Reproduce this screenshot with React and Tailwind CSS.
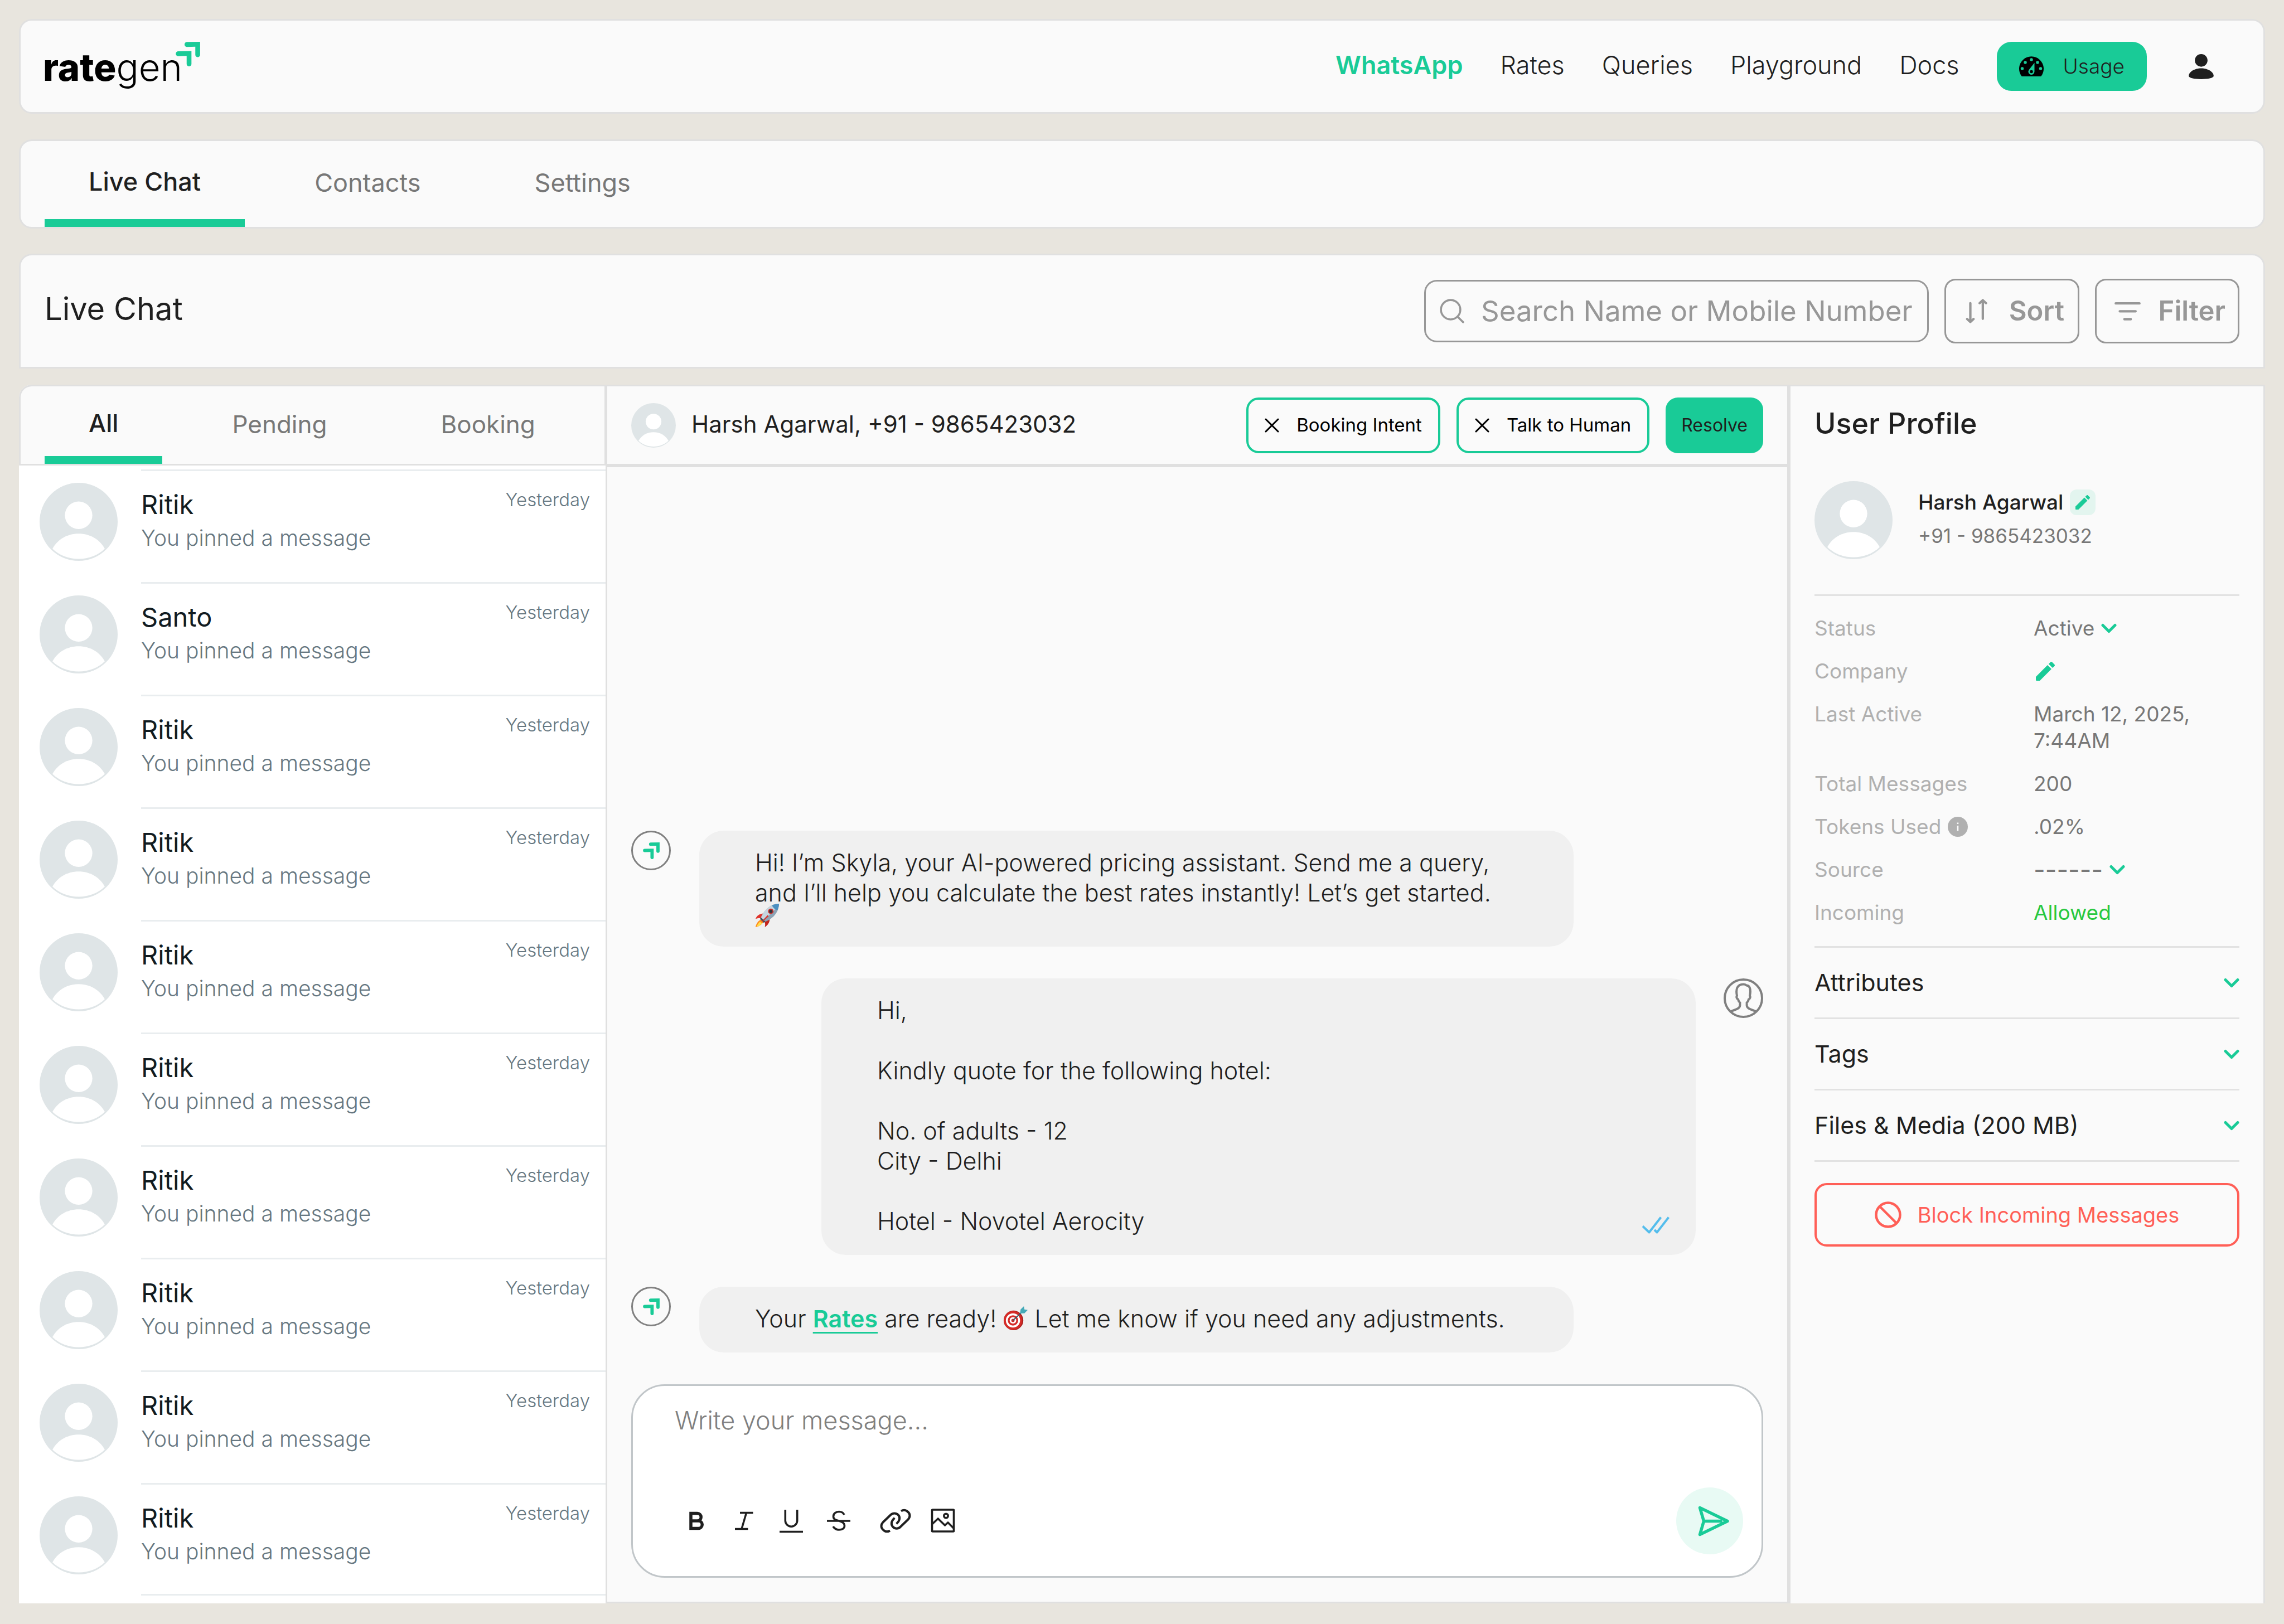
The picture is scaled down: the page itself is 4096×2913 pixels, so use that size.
import React from "react";

const NAV = ["Rates", "Queries", "Playground", "Docs"];
const CONTACTS = ["Ritik", "Santo", "Ritik", "Ritik", "Ritik", "Ritik", "Ritik", "Ritik", "Ritik", "Ritik"];
const SECTIONS = ["Attributes", "Tags", "Files & Media (200 MB)"];

function Arrows({ className }) {
  return (
    <svg viewBox="0 0 183 184" className={className} fill="#19cb97" aria-hidden="true">
      <path d="M85 1 183 0V97a18 18 0 0 1-36 0V37L85 39a19 19 0 0 1 0-38Z" />
      <path d="M19 71 118 69V166a18 18 0 0 1-36 0V106L19 108a18.500 18.500 0 0 1 0-37Z" />
    </svg>
  );
}

function Avatar({ className }) {
  return (
    <svg viewBox="0 0 100 100" className={className} aria-hidden="true">
      <circle cx="50" cy="50" r="50" fill="#dfe5e7" />
      <circle cx="50" cy="41.600" r="17.600" fill="#fff" />
      <path d="M16.500 84.500C23 72.500 35.500 65.200 50 65.200S77 72.500 83.500 84.500C75 93 63 97.500 50 97.500S25 93 16.500 84.500Z" fill="#fff" />
    </svg>
  );
}

function Chevron() {
  return (
    <svg viewBox="0 0 28 18" className="h-[18px] w-7 shrink-0" fill="none" stroke="#19cb97" strokeWidth="5" strokeLinecap="round" strokeLinejoin="round" aria-hidden="true">
      <path d="M3 3.500 14 14.500 25 3.500" />
    </svg>
  );
}

function Pencil({ className }) {
  return (
    <svg viewBox="3 3 18 18" className={className} fill="#19cb97" aria-hidden="true">
      <path d="M3 17.250V20.400c0 .35.25.6.6.6h3.150L17.810 9.940l-3.750-3.750L3 17.250ZM20.710 7.040c.39-.39.39-1.020 0-1.410l-2.340-2.340c-.39-.39-1.020-.39-1.410 0l-1.830 1.830 3.750 3.750 1.830-1.830Z" />
    </svg>
  );
}

function Gauge() {
  return (
    <svg viewBox="0 0 120 98" className="h-9 w-11" aria-hidden="true">
      <path d="M13 98A60 60 0 1 1 107 98Z" fill="#000" />
      <g fill="#19cb97">
        <circle cx="60" cy="16" r="7.500" />
        <circle cx="30" cy="30" r="7.500" />
        <circle cx="90" cy="30" r="7.500" />
        <circle cx="15" cy="60" r="7.500" />
        <circle cx="105" cy="60" r="7.500" />
        <path d="M75 31 48 66A15 15 0 1 0 75 75Z" />
      </g>
      <circle cx="60" cy="75" r="7.500" fill="#000" />
    </svg>
  );
}

function Rocket({ className }) {
  return (
    <svg viewBox="0 0 45 45" className={className} role="img" aria-label="rocket">
      <path d="M12 31 1 44 15 35Z" fill="#ffb31a" />
      <path d="M11 30C4 34 2 39 1 44c5-1 11-4 14-9Z" fill="#ff8a1c" />
      <path d="M9 34c-3 3-5 6-6 9 4-1 7-3 10-6Z" fill="#ffe14d" />
      <path d="M16 19C9 19 3 23 1 29c4-2 8-2 11-1Z" fill="#e0342b" />
      <path d="M27 29c0 7-4 12-9 15 1-4 1-8-1-11Z" fill="#c4241d" />
      <path d="M44 1C31 1 19 9 11 26l8 8C36 27 44 14 44 1Z" fill="#8ba3b5" />
      <path d="M44 1C31 1 19 9 11 26l4 4C27 22 38 12 44 1Z" fill="#c6d5df" />
      <path d="M44 1c-5 0-9 1-13 3 2 4 5 7 10 9 2-4 3-8 3-12Z" fill="#4c8fc0" />
      <circle cx="29" cy="15" r="5" fill="#c8302a" />
      <circle cx="29" cy="15" r="3" fill="#2b3740" />
      <path d="M11 26l8 8-3 2-7-7Z" fill="#40505c" />
      <path d="M23 22 13 33l1 1 11-10Z" fill="#d8322a" />
    </svg>
  );
}

function Dart({ className }) {
  return (
    <svg viewBox="0 0 45 45" className={className} role="img" aria-label="bullseye">
      <circle cx="19" cy="26" r="18" fill="#a81f1c" />
      <circle cx="18" cy="26" r="17" fill="#d52b27" />
      <circle cx="18" cy="26" r="13" fill="#fff" />
      <circle cx="18" cy="26" r="9.500" fill="#d52b27" />
      <circle cx="18" cy="26" r="6" fill="#fff" />
      <circle cx="18" cy="26" r="3" fill="#d52b27" />
      <path d="M18 26 35 10" stroke="#3d5a66" strokeWidth="2" />
      <path d="M31 13 32 6l6-6 1 6 6 1-6 6Z" fill="#45aab8" />
    </svg>
  );
}

function BotBadge() {
  return (
    <span className="flex size-[71px] shrink-0 items-center justify-center rounded-full border-[3px] border-[#808080]">
      <Arrows className="size-[30px]" />
    </span>
  );
}

function UserBadge() {
  return (
    <svg viewBox="0 0 71 71" className="size-[71px] shrink-0" fill="none" stroke="#808080" strokeWidth="4" aria-hidden="true">
      <circle cx="35.500" cy="35.500" r="33.500" />
      <path d="M13.500 59C20 56 29 55 29.400 48.500V43.500C27.500 42 26.500 40 26 37.500C23.500 36.500 22.500 33 24 31C23 26 22 22 24.500 16.500C27 11.500 31 10.500 35.500 10.500C38 10.500 39.500 11 41 12.500C44 12.500 45.800 14 46.800 16.500C49 22 48 26 47 31C48.500 33 47.500 36.500 45 37.500C44.500 40 43.500 42 41.600 43.500V48.500C42 55 51 56 57.500 59" />
    </svg>
  );
}

function Tab({ label, active }) {
  return (
    <button
      type="button"
      role="tab"
      aria-selected={active ? "true" : "false"}
      className={active ? "relative px-[79px] pb-2 font-medium text-[#1f1f1f]" : "px-[79px] pb-1 text-[#777777]"}
    >
      {label}
      {active && <span className="absolute inset-x-0 bottom-0 h-3.5 bg-[#19cb97]" />}
    </button>
  );
}

function Tool({ label, children }) {
  return (
    <button type="button" aria-label={label} className="size-[68px]">
      <svg viewBox="0 0 68 68" className="size-full" fill="none" stroke="#1f1f1f" strokeWidth="4" aria-hidden="true">
        {children}
      </svg>
    </button>
  );
}

function Row({ label, children }) {
  return (
    <div className="flex leading-[48px]">
      <dt className="flex w-[393px] shrink-0 items-center gap-3 self-start text-[#b0b0b0]">{label}</dt>
      <dd className="flex min-w-0 items-center gap-3 text-[#777777]">{children}</dd>
    </div>
  );
}

function IntentButton({ label }) {
  return (
    <button type="button" className="flex h-[100px] items-center gap-[31px] rounded-[22px] border-4 border-[#19cb97] px-[29px] text-[33px] text-black">
      <svg viewBox="0 0 26 26" className="size-[26px]" stroke="#000" strokeWidth="3" strokeLinecap="round" aria-hidden="true">
        <path d="M2 2 24 24M24 2 2 24" />
      </svg>
      {label}
    </button>
  );
}

export default function App() {
  return (
    <div className="flex min-h-screen flex-col bg-[#e8e5de] px-[34px] pt-[34px] pb-[37px] font-['Inter',sans-serif] text-[#1f1f1f]">
      <header className="flex h-[170px] items-center justify-between rounded-[23px] border-[3px] border-[#e0e0e0] bg-[#fafafa] pr-[89px] pl-10">
        <a href="#home" aria-label="rategen" className="relative pt-1 text-[67px] leading-[76px] text-black">
          <span className="font-extrabold">rate</span>
          <span className="font-light">gen</span>
          <Arrows className="absolute -top-1 left-[238px] size-11" />
        </a>
        <nav className="flex items-center gap-[67px] text-[45px] font-light">
          <a href="#whatsapp" className="pb-1 font-semibold text-[#19cb97]">WhatsApp</a>
          {NAV.map((n) => (
            <a key={n} href={"#" + n.toLowerCase()} className="pb-1">{n}</a>
          ))}
          <button type="button" className="mr-2 flex h-[88px] items-center gap-[35px] rounded-[26px] bg-[#19cb97] px-10 text-[37px]">
            <Gauge />
            Usage
          </button>
          <button type="button" aria-label="Account">
            <svg viewBox="0 0 126 127" className="size-[45px]" fill="#1f1f1f" aria-hidden="true">
              <circle cx="63" cy="32" r="32" />
              <path d="M0 111C0 90 30 72 63 72S126 90 126 111C126 122 95 127 63 127S0 122 0 111Z" />
            </svg>
          </button>
        </nav>
      </header>

      <div role="tablist" className="mt-[46px] flex h-40 gap-[46px] rounded-[23px] border-[3px] border-[#e0e0e0] bg-[#fafafa] px-[43px] text-[45px]">
        <Tab label="Live Chat" active />
        <Tab label="Contacts" />
        <Tab label="Settings" />
      </div>

      <section className="mt-[45px] flex h-[206px] items-center justify-between rounded-t-[23px] border-[3px] border-[#e0e0e0] bg-[#fafafa] px-[43px]">
        <h1 className="pb-2 text-[56px]">Live Chat</h1>
        <div className="flex items-center gap-7 text-[#979797]">
          <label className="flex h-28 w-[905px] items-center gap-[30px] rounded-[23px] border-[3px] border-[#979797] pr-1 pl-[25px]">
            <svg viewBox="0 0 62 62" className="size-11 shrink-0" fill="none" stroke="#979797" strokeWidth="5" strokeLinecap="round" aria-hidden="true">
              <circle cx="27.500" cy="27.500" r="24.500" />
              <path d="M46 46 59 59" />
            </svg>
            <input type="text" aria-label="Search Name or Mobile Number" placeholder="Search Name or Mobile Number" className="min-w-0 flex-1 bg-transparent text-[51px] outline-none placeholder:text-[#979797]" />
          </label>
          <button type="button" className="flex h-[116px] w-[242px] items-center justify-between rounded-[20px] border-[3px] border-[#979797] pr-6 pl-[35px] text-[49px] font-semibold">
            <svg viewBox="0 0 108 124" className="h-11 w-[39px]" fill="none" stroke="#979797" strokeWidth="12" strokeLinecap="round" strokeLinejoin="round" aria-hidden="true">
              <path d="M23 22V116M7 102 23 117 39 102M86 101V8M70 22 86 7 102 22" />
            </svg>
            Sort
          </button>
          <button type="button" className="flex h-[116px] w-[259px] items-center justify-between rounded-[20px] border-[3px] border-[#979797] pr-[22px] pl-8 text-[49px] font-semibold">
            <svg viewBox="0 0 129 91" className="h-[33px] w-[47px]" fill="none" stroke="#979797" strokeWidth="12" strokeLinecap="round" aria-hidden="true">
              <path d="M6 6H123M26 45H104M49 84H80" />
            </svg>
            Filter
          </button>
        </div>
      </section>

      <main className="mt-[29px] grid flex-1 grid-cols-[1055fr_2116fr_857fr]">
        <aside className="flex flex-col rounded-tl-[23px] bg-white">
          <div role="tablist" className="flex h-[145px] gap-[46px] rounded-tl-[23px] border-t-[3px] border-r-[5px] border-b-[3px] border-l-[3px] border-[#e0e0e0] bg-[#fafafa] pl-[43px] text-[44px]">
            <Tab label="All" active />
            <Tab label="Pending" />
            <Tab label="Booking" />
          </div>
          <ul className="flex-1 border-r-[3px] border-[#e0e0e0] pt-[7px] pb-[11px]">
            {CONTACTS.map((name, i) => (
              <li key={i} className="flex h-[202px] gap-[42px] pl-[37px]">
                <Avatar className="mt-6 size-[140px]" />
                <div className={i === CONTACTS.length - 1 ? "flex flex-1 justify-between border-y-[3px] border-[#e9edef] pt-[30px] pr-7" : "flex flex-1 justify-between border-t-[3px] border-[#e9edef] pt-[30px] pr-7"}>
                  <div className="leading-[60px]">
                    <p className="text-[47px] text-[#111b21]">{name}</p>
                    <p className="text-[39px] font-light text-[#667781]">You pinned a message</p>
                  </div>
                  <time className="text-[33px] leading-[42px] font-light text-[#667781]">Yesterday</time>
                </div>
              </li>
            ))}
          </ul>
        </aside>

        <section className="flex flex-col border-b-[3px] border-[#e0e0e0] bg-[#fafafa]">
          <div className="flex h-[148px] items-center border-t-[3px] border-b-[6px] border-[#e0e0e0] px-[43px]">
            <Avatar className="size-20" />
            <h2 className="ml-7 flex-1 pb-1 text-[42px]">Harsh Agarwal, +91 - 9865423032</h2>
            <div className="flex gap-[29px]">
              <IntentButton label="Booking Intent" />
              <IntentButton label="Talk to Human" />
              <button type="button" className="h-[100px] rounded-[22px] bg-[#19cb97] px-7 text-[32px]">Resolve</button>
            </div>
          </div>

          <div className="flex flex-1 flex-col justify-end gap-[57px] px-[43px] pb-[43px] text-[43px] leading-[54px] font-light">
            <div className="flex gap-[51px]">
              <BotBadge />
              <div className="w-full max-w-[1568px] rounded-[44px] bg-[#f0f0f0] px-[100px] pt-[30px] pb-[34px]">
                <p>Hi! I’m Skyla, your AI-powered pricing assistant. Send me a query, and I’ll help you calculate the best rates instantly! Let’s get started.</p>
                <Rocket className="-mt-2 size-11" />
              </div>
            </div>
            <div className="flex justify-end gap-[50px]">
              <div className="flex w-full max-w-[1568px] items-end justify-between rounded-[44px] bg-[#f0f0f0] pt-[30px] pr-[47px] pb-[34px] pl-[100px]">
                <p className="whitespace-pre-line">{"Hi,\n\nKindly quote for the following hotel:\n\nNo. of adults - 12\nCity - Delhi\n\nHotel - Novotel Aerocity"}</p>
                <svg viewBox="0 0 49 31" className="mb-1 h-[31px] w-[49px]" fill="none" stroke="#54bdec" strokeWidth="4" strokeLinejoin="round" aria-label="Read" role="img">
                  <path d="M1 17.500 12.500 28.500 33.500 1.500M22 24 26.500 28.500 47.500 1.500" />
                </svg>
              </div>
              <UserBadge />
            </div>
            <div className="flex gap-[51px]">
              <BotBadge />
              <p className="w-full max-w-[1568px] rounded-[44px] bg-[#f0f0f0] px-[100px] pt-[30px] pb-[34px]">
                Your <a href="#rates" className="font-semibold text-[#19cb97] underline decoration-[3px] underline-offset-8">Rates</a> are ready! <Dart className="inline-block size-11 align-[-6px]" /> Let me know if you need any adjustments.
              </p>
            </div>

            <form className="flex flex-col gap-[39px] rounded-[60px] border-[3px] border-[#c1c6c9] bg-white pt-[35px] pr-[33px] pb-[39px] pl-[75px]">
              <textarea rows="2" aria-label="Message" placeholder="Write your message..." className="block resize-none bg-transparent text-[45px] leading-[54px] outline-none placeholder:text-[#808080]" />
              <div className="flex items-center justify-between">
                <div className="flex gap-[17px] pl-[5px]">
                  <Tool label="Bold">
                    <path strokeWidth="5.500" d="M24 20.500H35.500a6.750 6.750 0 0 1 0 13.500H24ZM24 34H37.500a6.750 6.750 0 0 1 0 13.500H24Z" />
                  </Tool>
                  <Tool label="Italic">
                    <path strokeWidth="3.500" d="M27 19.500H50.500M18 48.500H41.500M38.500 19.500 30 48.500" />
                  </Tool>
                  <Tool label="Underline">
                    <path strokeWidth="3.600" d="M23.300 14V33.500a10.700 10.700 0 0 0 21.400 0V14M13 53.500H55" />
                  </Tool>
                  <Tool label="Strikethrough">
                    <path strokeWidth="3.600" d="M44 23C42 18.500 38 17.500 34.500 17.500C29 17.500 24.500 21 24.500 26C24.500 31 28 32.500 34.500 34C41 36 44.500 38 44.500 43C44.500 47.500 40 50 34.500 50C30 50 26.500 48 24 44M13 34H55" />
                  </Tool>
                  <span />
                  <Tool label="Link">
                    <g strokeWidth="4">
                      <path d="M24 51.500C21 53.500 17 54 13.500 51.500C7.500 47.500 7 41.500 11.500 36.500L25.500 23C29 19.500 35 19.500 38.500 23C42.500 27 42.500 33 35.600 39.200" />
                      <path transform="rotate(180 34 34)" d="M24 51.500C21 53.500 17 54 13.500 51.500C7.500 47.500 7 41.500 11.500 36.500L25.500 23C29 19.500 35 19.500 38.500 23C42.500 27 42.500 33 35.600 39.200" />
                    </g>
                  </Tool>
                  <Tool label="Image">
                    <g strokeWidth="3.600" strokeLinejoin="round">
                      <rect x="14.500" y="14" width="39" height="39" rx="1" />
                      <circle cx="39.500" cy="25" r="3.700" />
                      <path d="M14.500 40 25.200 30 37.600 42 43 37 53.500 47.500" />
                    </g>
                  </Tool>
                </div>
                <button type="button" aria-label="Send" className="flex size-[120px] items-center justify-center rounded-full bg-[#e8faf4]">
                  <svg viewBox="0 0 57 55" className="ml-3 h-[55px] w-[57px]" fill="none" stroke="#19cb97" strokeWidth="5.500" strokeLinecap="round" strokeLinejoin="round" aria-hidden="true">
                    <path d="M4.500 3.500 54 27.500 4.500 51.500 11.500 27.500ZM11.500 27.500H42" />
                  </svg>
                </button>
              </div>
            </form>
          </div>
        </section>

        <aside className="border-t-[3px] border-r-[3px] border-l-[6px] border-[#e0e0e0] bg-[#fafafa] px-[43px] pt-8 text-[37px]">
          <h2 className="text-[52px] leading-[70px] font-medium">User Profile</h2>
          <div className="mt-[68px] flex gap-[46px] border-b-[3px] border-[#e2e2e2] pb-[63px]">
            <Avatar className="size-[140px]" />
            <div className="pt-2 leading-[60px]">
              <div className="flex items-center gap-3">
                <h3 className="font-medium">Harsh Agarwal</h3>
                <button type="button" aria-label="Edit name" className="flex size-[46px] items-center justify-center rounded-xl bg-[#e3f5ef]">
                  <Pencil className="size-[26px]" />
                </button>
              </div>
              <p className="text-[35px] text-[#777777]">+91 - 9865423032</p>
            </div>
          </div>
          <dl className="flex flex-col gap-[29px] border-b-[3px] border-[#e2e2e2] pt-[34px] pb-9">
            <Row label="Status">
              <select aria-label="Status" className="appearance-none bg-transparent [field-sizing:content]">
                <option>Active</option>
              </select>
              <Chevron />
            </Row>
            <Row label="Company">
              <button type="button" aria-label="Edit company" className="flex h-12 items-center pl-1">
                <Pencil className="size-[34px]" />
              </button>
            </Row>
            <Row label="Last Active">
              <span>March 12, 2025,<br />7:44AM</span>
            </Row>
            <Row label="Total Messages">200</Row>
            <Row
              label={
                <>
                  Tokens Used
                  <svg viewBox="0 0 36 36" className="size-9" aria-hidden="true">
                    <circle cx="18" cy="18" r="18" fill="#b0b0b0" />
                    <path d="M18 16V25.500M18 10.500V13" stroke="#fafafa" strokeWidth="2.600" />
                  </svg>
                </>
              }
            >
              .02%
            </Row>
            <Row label="Source">
              <select aria-label="Source" className="h-12 appearance-none bg-transparent text-[45px] [field-sizing:content]">
                <option>------</option>
              </select>
              <Chevron />
            </Row>
            <Row label="Incoming"><span className="text-[#28c840]">Allowed</span></Row>
          </dl>
          {SECTIONS.map((s) => (
            <button key={s} type="button" aria-expanded="false" className="flex h-32 w-full items-center justify-between border-b-[3px] border-[#e2e2e2] text-[43px]">
              {s}
              <Chevron />
            </button>
          ))}
          <button type="button" className="mt-[38px] flex h-[114px] w-full items-center justify-center gap-[29px] rounded-[22px] border-4 border-[#ff5f57] text-[38px] text-[#ff5f57]">
            <svg viewBox="0 0 48 48" className="size-12" fill="none" stroke="#ff5f57" strokeWidth="4.500" aria-hidden="true">
              <circle cx="24" cy="24" r="21.500" />
              <path d="M9 9 39 39" />
            </svg>
            Block Incoming Messages
          </button>
        </aside>
      </main>
    </div>
  );
}
